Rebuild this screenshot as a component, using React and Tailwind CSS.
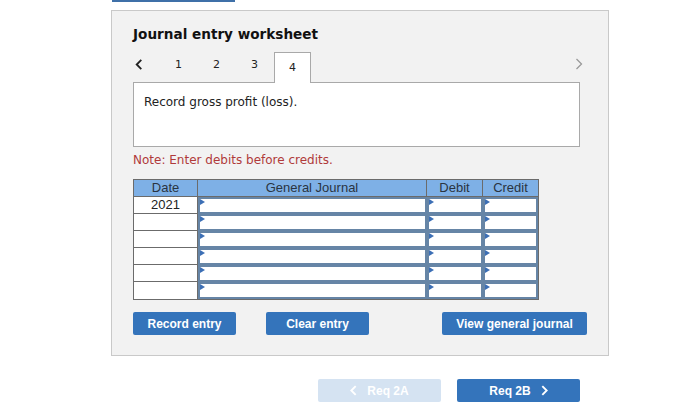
import React from "react";

const rows = ["2021", "", "", "", "", ""];

function Chevron({ dir = "left", className = "", stroke = 2 }) {
  return (
    <svg viewBox="0 0 8 12" className={className} fill="none" stroke="currentColor" strokeWidth={stroke}>
      {dir === "left" ? <polyline points="6.5,1 1.5,6 6.5,11" /> : <polyline points="1.5,1 6.5,6 1.5,11" />}
    </svg>
  );
}

function Marker() {
  return (
    <span className="absolute left-0 top-0 w-0 h-0 border-t-[3px] border-b-[3px] border-l-[5px] border-t-transparent border-b-transparent border-l-[#3c6fb5]" />
  );
}

function InputCell({ w }) {
  return (
    <div className={`relative h-[17px] ${w} border-2 border-[#6685a6] bg-white`}>
      <Marker />
    </div>
  );
}

export default function App() {
  return (
    <div className="w-[697px] h-[409px] bg-white overflow-hidden font-['Liberation_Sans',Arial,sans-serif]">
      <div className="ml-[112px] w-[123px] h-[2px] bg-[#3f70a8]" />
      <div className="ml-[111px] mt-[8px] w-[498px] h-[346px] border border-[#c9c9c9] bg-[#f2f2f2] pl-[21px] pt-[13px]">
        <h1 className="font-['DejaVu_Sans',Verdana,sans-serif] font-bold text-[13.6px] leading-[20px] text-[#111]">
          Journal entry worksheet
        </h1>

        {/* tabs */}
        <div className="relative flex items-end h-[31px] mt-[7px] w-[447px] font-['DejaVu_Sans',Verdana,sans-serif] text-[11px] text-[#222]">
          <span className="w-[42px] pl-[2px] pb-[12px]">
            <Chevron className="w-[8px] h-[11px] text-[#222]" />
          </span>
          <span className="w-[38px] pb-[9px]">1</span>
          <span className="w-[38px] pb-[9px]">2</span>
          <span className="w-[23px] pb-[9px]">3</span>
          <span className="relative z-10 -mb-px w-[37px] h-[31px] border border-[#a9a9a9] border-b-0 bg-white text-center pt-[7px]">4</span>
          <span className="ml-auto mr-[-3px] pb-[12px]">
            <Chevron dir="right" stroke={1.3} className="w-[8px] h-[12px] text-[#9a9a9a]" />
          </span>
        </div>

        <div className="w-[447px] h-[65px] border border-[#a9a9a9] bg-white px-[10px] pt-[10px] font-['DejaVu_Sans',Verdana,sans-serif] text-[12px] text-[#222]">
          Record gross profit (loss).
        </div>

        <p className="mt-[5px] font-['DejaVu_Sans',Verdana,sans-serif] text-[12px] leading-[16px] text-[#b03a3a]">
          Note: Enter debits before credits.
        </p>

        {/* table */}
        <div className="mt-[11px] w-[406px] border border-[#6b6b6b] text-[12px]">
          <div className="flex h-[17px] bg-[#7eb0e6] text-[13px] text-[#2a3441] leading-[16px] border-b border-[#6b6b6b]">
            <div className="w-[64px] text-center border-r border-[#6b6b6b]">Date</div>
            <div className="w-[229px] text-center border-r border-[#6b6b6b]">General Journal</div>
            <div className="w-[56px] text-center border-r border-[#6b6b6b]">Debit</div>
            <div className="w-[55px] text-center">Credit</div>
          </div>
          {rows.map((d, i) => (
            <div key={i} className="flex bg-white">
              <div className={`w-[64px] h-[17px] text-center text-[13px] leading-[15px] text-[#222] border-r border-[#6b6b6b] ${i < rows.length - 1 ? "border-b" : ""}`}>
                {d}
              </div>
              <InputCell w="w-[229px]" />
              <InputCell w="w-[56px]" />
              <InputCell w="w-[55px]" />
            </div>
          ))}
        </div>

        <div className="flex mt-[12px] w-[454px] text-[12px] font-bold text-white">
          <button className="w-[103px] h-[23px] rounded-[2px] bg-[#3474bb]">Record entry</button>
          <button className="ml-[30px] w-[103px] h-[23px] rounded-[2px] bg-[#3474bb]">Clear entry</button>
          <button className="ml-auto w-[145px] h-[23px] rounded-[2px] bg-[#3474bb]">View general journal</button>
        </div>
      </div>

      <div className="flex mt-[23px] ml-[318px] text-[12px] font-bold">
        <button className="flex items-center justify-center gap-[10px] w-[123px] h-[23px] rounded-[2px] bg-[#d5e3f2] text-white">
          <Chevron className="w-[7px] h-[11px]" stroke={2.2} /> Req 2A
        </button>
        <button className="ml-[16px] flex items-center justify-center gap-[10px] w-[123px] h-[23px] rounded-[2px] bg-[#3474bb] text-white">
          Req 2B <Chevron dir="right" className="w-[7px] h-[11px]" stroke={2.2} />
        </button>
      </div>
    </div>
  );
}
